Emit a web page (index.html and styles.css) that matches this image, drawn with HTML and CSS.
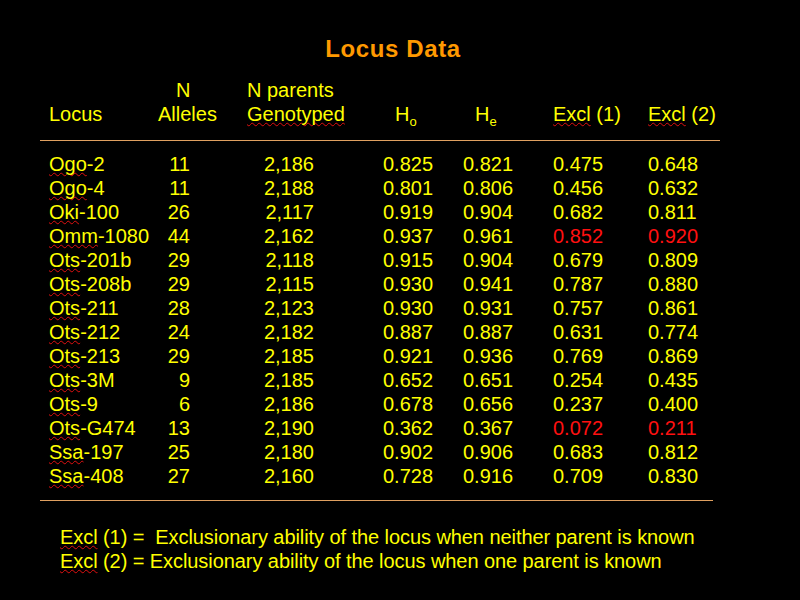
FILE: index.html
```html
<!DOCTYPE html>
<html>
<head>
<meta charset="utf-8">
<link rel="stylesheet" href="styles.css">
</head>
<body>
<div class="slide">
  <h1 class="title">Locus Data</h1>
  <div class="grid head">
    <span></span><span class="c-n">N</span><span>N parents</span><span></span><span></span><span></span><span></span>
    <span>Locus</span><span>Alleles</span><span><span class="sp">Genotyped</span></span><span class="c-h">H<sub>o</sub></span><span class="c-h">H<sub>e</sub></span><span><span class="sp">Excl</span> (1)</span><span><span class="sp">Excl</span> (2)</span>
  </div>
  <div class="rule rule-top"></div>
  <div class="grid body">
    <span><span class="sp">Ogo</span>-2</span><span class="r2">11</span><span class="r3">2,186</span><span>0.825</span><span>0.821</span><span>0.475</span><span>0.648</span>
    <span><span class="sp">Ogo</span>-4</span><span class="r2">11</span><span class="r3">2,188</span><span>0.801</span><span>0.806</span><span>0.456</span><span>0.632</span>
    <span><span class="sp">Oki</span>-100</span><span class="r2">26</span><span class="r3">2,117</span><span>0.919</span><span>0.904</span><span>0.682</span><span>0.811</span>
    <span><span class="sp">Omm</span>-1080</span><span class="r2">44</span><span class="r3">2,162</span><span>0.937</span><span>0.961</span><span class="red">0.852</span><span class="red">0.920</span>
    <span><span class="sp">Ots</span>-201b</span><span class="r2">29</span><span class="r3">2,118</span><span>0.915</span><span>0.904</span><span>0.679</span><span>0.809</span>
    <span><span class="sp">Ots</span>-208b</span><span class="r2">29</span><span class="r3">2,115</span><span>0.930</span><span>0.941</span><span>0.787</span><span>0.880</span>
    <span><span class="sp">Ots</span>-211</span><span class="r2">28</span><span class="r3">2,123</span><span>0.930</span><span>0.931</span><span>0.757</span><span>0.861</span>
    <span><span class="sp">Ots</span>-212</span><span class="r2">24</span><span class="r3">2,182</span><span>0.887</span><span>0.887</span><span>0.631</span><span>0.774</span>
    <span><span class="sp">Ots</span>-213</span><span class="r2">29</span><span class="r3">2,185</span><span>0.921</span><span>0.936</span><span>0.769</span><span>0.869</span>
    <span><span class="sp">Ots</span>-3M</span><span class="r2">9</span><span class="r3">2,185</span><span>0.652</span><span>0.651</span><span>0.254</span><span>0.435</span>
    <span><span class="sp">Ots</span>-9</span><span class="r2">6</span><span class="r3">2,186</span><span>0.678</span><span>0.656</span><span>0.237</span><span>0.400</span>
    <span><span class="sp">Ots</span>-G474</span><span class="r2">13</span><span class="r3">2,190</span><span>0.362</span><span>0.367</span><span class="red">0.072</span><span class="red">0.211</span>
    <span><span class="sp">Ssa</span>-197</span><span class="r2">25</span><span class="r3">2,180</span><span>0.902</span><span>0.906</span><span>0.683</span><span>0.812</span>
    <span><span class="sp">Ssa</span>-408</span><span class="r2">27</span><span class="r3">2,160</span><span>0.728</span><span>0.916</span><span>0.709</span><span>0.830</span>
  </div>
  <div class="rule rule-bottom"></div>
  <div class="notes">
    <p><span class="sp">Excl</span> (1) =&nbsp; Exclusionary ability of the locus when neither parent is known</p>
    <p><span class="sp">Excl</span> (2) = Exclusionary ability of the locus when one parent is known</p>
  </div>
</div>
</body>
</html>
```
FILE: styles.css
```css
html, body {
  margin: 0;
  padding: 0;
  background: #000;
}
.slide {
  width: 800px;
  height: 600px;
  box-sizing: border-box;
  padding: 34px 0 0 49px;
  font-family: "Liberation Sans", Arial, sans-serif;
  color: #ffff00;
  font-size: 20px;
}
.title {
  margin: 0 0 14px -49px;
  padding-right: 14px;
  text-align: center;
  font-size: 24px;
  letter-spacing: 0.6px;
  line-height: 30px;
  font-weight: bold;
  color: #ff9900;
}
.grid {
  display: grid;
  grid-template-columns: 109px 89px 136px 80px 90px 95px 80px;
  line-height: 24px;
  white-space: nowrap;
}
.c-n { padding-left: 18px; }
.c-h { padding-left: 12px; }
sub {
  font-size: 13px;
  vertical-align: -5px;
  line-height: 0;
}
.r2 { text-align: right; padding-right: 57px; }
.r3 { text-align: right; padding-right: 69px; }
.red { color: #ff1010; }
.sp {
  text-decoration: underline wavy #e01010;
  text-decoration-thickness: 1px;
  text-underline-offset: 1px;
  text-decoration-skip-ink: none;
}
.rule {
  height: 1px;
  background: #e0a060;
  margin-left: -9px;
}
.rule-top {
  width: 680px;
  margin-top: 14px;
  margin-bottom: 11px;
}
.rule-bottom {
  width: 673px;
  margin-top: 12px;
  margin-bottom: 24px;
}
.notes {
  margin-left: 11px;
  line-height: 24px;
  letter-spacing: -0.07px;
}
.notes p { margin: 0; }
```
